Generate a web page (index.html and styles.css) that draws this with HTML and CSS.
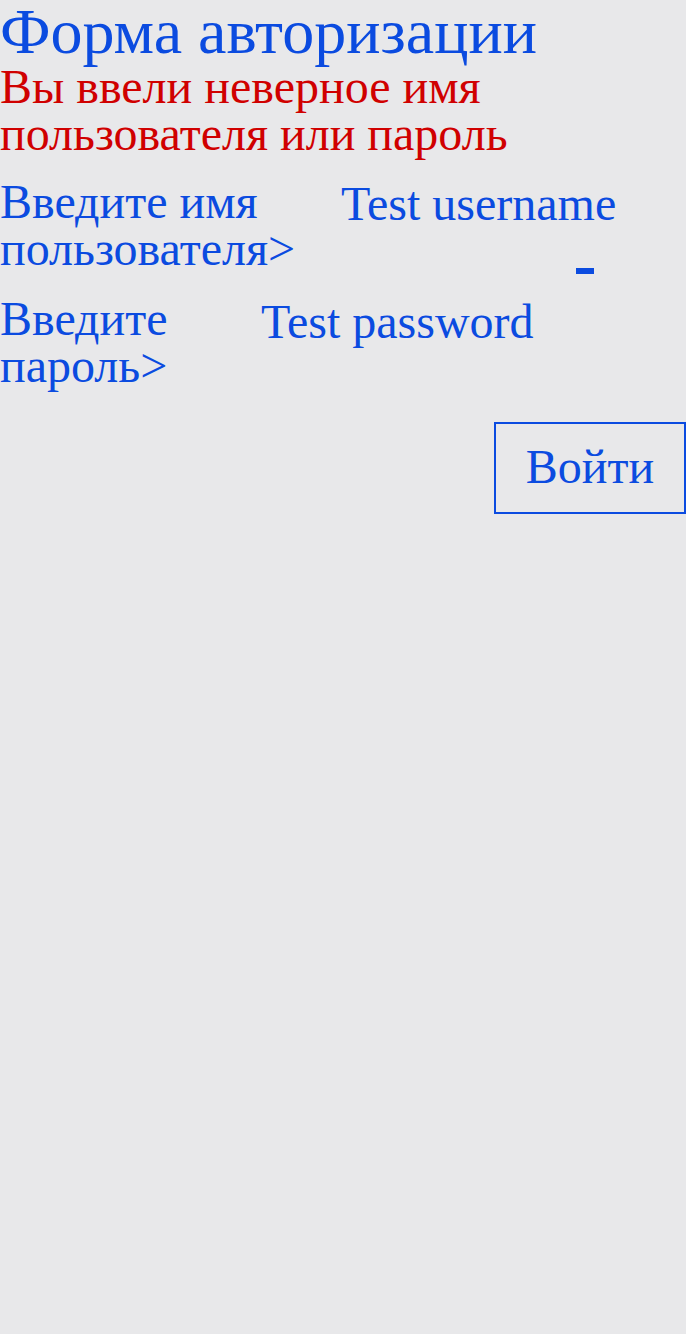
FILE: index.html
```html
<!DOCTYPE html>
<html lang="ru">
<head>
<meta charset="utf-8">
<title>Форма авторизации</title>
<link rel="stylesheet" href="styles.css">
</head>
<body>
<div class="page">
  <h1 class="title">Форма авторизации</h1>
  <p class="error">Вы ввели неверное имя пользователя или пароль</p>
  <form class="form">
    <div class="row row-user">
      <label class="label label-user">Введите имя пользователя&gt;</label>
      <div class="field field-user">
        <span class="value">Test username</span>
        <span class="caret"></span>
      </div>
    </div>
    <div class="row row-pass">
      <label class="label label-pass">Введите пароль&gt;</label>
      <div class="field field-pass">
        <span class="value">Test password</span>
      </div>
    </div>
    <div class="actions">
      <button type="button" class="submit">Войти</button>
    </div>
  </form>
</div>
</body>
</html>
```
FILE: styles.css
```css
html, body {
  margin: 0;
  padding: 0;
  background: #e8e8ea;
}
.page {
  font-family: "Liberation Serif", "Times New Roman", serif;
  color: #0b4be0;
}
.title {
  margin: 0;
  font-size: 64px;
  font-weight: normal;
  line-height: 63px;
  color: #0b4be0;
}
.error {
  margin: 0;
  font-size: 48px;
  line-height: 47px;
  color: #d00000;
}
.form {
  margin-top: 21px;
}
.row {
  display: flex;
  align-items: flex-start;
  font-size: 48px;
  line-height: 47px;
}
.label-user {
  width: 300px;
  flex: none;
}
.field {
  display: flex;
  flex-direction: column;
}
.field-user {
  margin-left: 41px;
  padding-top: 2px;
}
.caret {
  align-self: flex-start;
  width: 18px;
  height: 6px;
  background: #0b4be0;
  margin-top: 41px;
  margin-left: 235px;
}
.row-pass {
  margin-top: 21px;
}
.label-pass {
  width: 172px;
  flex: none;
}
.field-pass {
  margin-left: 89px;
  padding-top: 3px;
}
.actions {
  display: flex;
  justify-content: flex-end;
  margin-top: 33px;
}
.submit {
  font-family: "Liberation Serif", "Times New Roman", serif;
  font-size: 48px;
  line-height: 47px;
  color: #0b4be0;
  background: transparent;
  border: 2px solid #0b4be0;
  width: 192px;
  height: 92px;
  padding: 0 0 4px 0;
  margin: 0;
}
```
